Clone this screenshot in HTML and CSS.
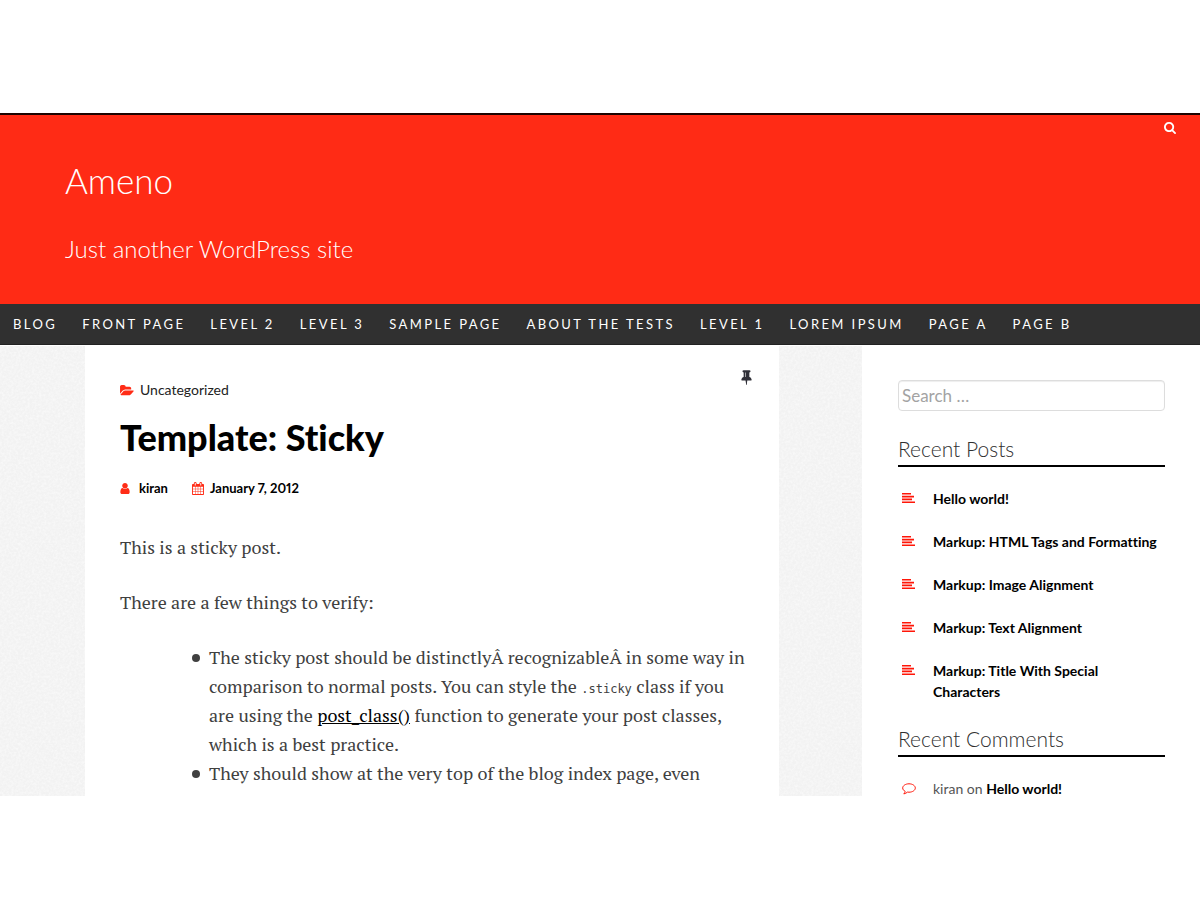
FILE: index.html
```html
<!DOCTYPE html>
<html lang="en">
<head>
<meta charset="utf-8">
<title>Ameno</title>
<link rel="stylesheet" href="styles.css">
</head>
<body>
<svg class="sprite" aria-hidden="true">
  <symbol id="lines" viewBox="0 0 13 10"><path d="M0 0h9v1.600H0zM0 2.800h12v1.600H0zM0 5.600h10v1.600H0zM0 8.400h13v1.600H0z"/></symbol>
  <symbol id="comment" viewBox="0 0 14 12"><path d="M7 .8C3.500.8.700 2.700.700 5c0 1.400 1 2.600 2.500 3.400-.2 1-.7 1.800-1.400 2.500 1.500-.2 2.700-.9 3.600-1.800.5.100 1 .1 1.600.1 3.500 0 6.300-1.900 6.300-4.200S10.500.8 7 .8z" fill="none" stroke="currentColor"/></symbol>
</svg>
<div class="site">
  <header class="masthead">
    <button class="search-toggle" type="button" aria-label="Search">
      <svg viewBox="0 0 1664 1792"><path d="M1152 832q0-185-131.500-316.500t-316.500-131.500-316.500 131.500-131.500 316.500 131.500 316.500 316.500 131.500 316.500-131.500 131.500-316.500zm512 832q0 52-38 90t-90 38q-54 0-90-38l-343-342q-179 124-399 124-143 0-273.500-55.500t-225-150-150-225-55.500-273.500 55.500-273.500 150-225 225-150 273.500-55.500 273.500 55.500 225 150 150 225 55.500 273.500q0 220-124 399l343 343q37 37 37 90z"/></svg>
    </button>
    <h1 class="site-title">Ameno</h1>
    <p class="tagline">Just another WordPress site</p>
  </header>
  <nav class="menu">
    <a href="#">Blog</a>
    <a href="#">Front Page</a>
    <a href="#">Level 2</a>
    <a href="#">Level 3</a>
    <a href="#">Sample Page</a>
    <a href="#">About The Tests</a>
    <a href="#">Level 1</a>
    <a href="#">Lorem Ipsum</a>
    <a href="#">Page A</a>
    <a href="#">Page B</a>
  </nav>
  <div class="columns">
    <main class="post">
      <div class="post-top">
        <a class="category" href="#">
          <svg class="folder" viewBox="0 0 1920 1792"><path d="M1879 952q0 31-31 66l-336 396q-43 51-120.500 86.500t-143.500 35.500h-1088q-34 0-60.500-13t-26.500-43q0-31 31-66l336-396q43-51 120.500-86.500t143.500-35.500h1088q34 0 60.500 13t26.500 43zm-343-344v160h-832q-94 0-197 47.500t-164 119.500l-337 396-5 6q0-4-.5-12.500t-.5-12.500v-960q0-92 66-158t158-66h320q92 0 158 66t66 158v32h544q92 0 158 66t66 158z"/></svg>
          Uncategorized</a>
        <svg class="pin" viewBox="0 0 1152 1792"><path d="M480 864v-448q0-14-9-23t-23-9-23 9-9 23v448q0 14 9 23t23 9 23-9 9-23zm672 352q0 26-19 45t-45 19h-429l-51 483q-2 12-10.500 20.500t-20.500 8.500h-1q-27 0-32-27l-76-485h-404q-26 0-45-19t-19-45q0-123 78.500-221.500t177.500-98.500v-512q-52 0-90-38t-38-90 38-90 90-38h640q52 0 90 38t38 90-38 90-90 38v512q99 0 177.500 98.500t78.500 221.500z"/></svg>
      </div>
      <h2 class="post-title">Template: Sticky</h2>
      <div class="meta">
        <a href="#"><svg class="user" viewBox="0 0 1280 1792"><path d="M1280 1399q0 109-62.500 187t-150.500 78h-854q-88 0-150.500-78t-62.500-187q0-85 8.500-160.500t31.500-152 58.500-131 94-89 134.500-34.500q131 128 313 128t313-128q76 0 134.500 34.500t94 89 58.500 131 31.500 152 8.500 160.500zm-256-887q0 159-112.500 271.500t-271.500 112.500-271.500-112.500-112.500-271.500 112.500-271.500 271.500-112.500 271.500 112.500 112.500 271.500z"/></svg>kiran</a>
        <a href="#"><svg class="calendar" viewBox="0 0 1664 1792"><path d="M128 1664h288v-288h-288v288zm352 0h320v-288h-320v288zm-352-352h288v-320h-288v320zm352 0h320v-320h-320v320zm-352-384h288v-288h-288v288zm736 736h320v-288h-320v288zm-384-736h320v-288h-320v288zm768 736h288v-288h-288v288zm-384-352h320v-320h-320v320zm-352-864v-288q0-13-9.500-22.500t-22.500-9.500h-64q-13 0-22.500 9.500t-9.500 22.500v288q0 13 9.500 22.500t22.500 9.500h64q13 0 22.500-9.500t9.500-22.500zm736 864h288v-320h-288v320zm-384-384h320v-288h-320v288zm384 0h288v-288h-288v288zm32-480v-288q0-13-9.500-22.500t-22.500-9.500h-64q-13 0-22.500 9.500t-9.500 22.500v288q0 13 9.500 22.500t22.500 9.500h64q13 0 22.500-9.500t9.500-22.500zm384-64v1280q0 52-38 90t-90 38h-1408q-52 0-90-38t-38-90v-1280q0-52 38-90t90-38h128v-96q0-66 47-113t113-47h64q66 0 113 47t47 113v96h384v-96q0-66 47-113t113-47h64q66 0 113 47t47 113v96h128q52 0 90 38t38 90z"/></svg>January 7, 2012</a>
      </div>
      <div class="entry">
        <p>This is a sticky post.</p>
        <p>There are a few things to verify:</p>
        <ul>
          <li>The sticky post should be distinctlyÂ recognizableÂ in some way in comparison to normal posts. You can style the <code>.sticky</code> class if you are using the <a href="#">post_class()</a> function to generate your post classes, which is a best practice.</li>
          <li>They should show at the very top of the blog index page, even though they could be several posts back chronologically.</li>
        </ul>
      </div>
    </main>
    <aside class="sidebar">
      <input class="search" type="search" placeholder="Search …" aria-label="Search">
      <h3>Recent Posts</h3>
      <ul class="links">
        <li><svg class="lines"><use href="#lines"/></svg><a href="#">Hello world!</a></li>
        <li><svg class="lines"><use href="#lines"/></svg><a href="#">Markup: HTML Tags and Formatting</a></li>
        <li><svg class="lines"><use href="#lines"/></svg><a href="#">Markup: Image Alignment</a></li>
        <li><svg class="lines"><use href="#lines"/></svg><a href="#">Markup: Text Alignment</a></li>
        <li><svg class="lines"><use href="#lines"/></svg><a href="#">Markup: Title With Special Characters</a></li>
      </ul>
      <h3>Recent Comments</h3>
      <ul class="links">
        <li><svg class="comment"><use href="#comment"/></svg><span>kiran on <a href="#">Hello world!</a></span></li>
      </ul>
    </aside>
  </div>
</div>
</body>
</html>
```
FILE: styles.css
```css
* { box-sizing: border-box; }
body {
  margin: 0;
  height: 100vh;
  padding: 113px 0 104px;
  display: flex;
  background: #fff;
  color: #404040;
  font-family: Lato, "Open Sans", sans-serif;
  font-variant-ligatures: none;
}
h1, h2, h3, p, ul { margin: 0; padding: 0; }
a { color: #000; text-decoration: none; }
svg { fill: currentColor; flex: none; }
.sprite { position: absolute; width: 0; height: 0; }
.site {
  flex: 1;
  min-width: 0;
  overflow: hidden;
  display: flex;
  flex-direction: column;
  background-color: #f2f2f2;
  background-image: url("data:image/svg+xml,%3Csvg xmlns='http://www.w3.org/2000/svg' width='200' height='200'%3E%3Cfilter id='n'%3E%3CfeTurbulence type='fractalNoise' baseFrequency='.43' numOctaves='3' stitchTiles='stitch'/%3E%3CfeColorMatrix values='0 0 0 0 1 0 0 0 0 1 0 0 0 0 1 2 0 0 0 -.7'/%3E%3C/filter%3E%3Crect width='200' height='200' filter='url(%23n)' opacity='.5'/%3E%3C/svg%3E");
}
.masthead {
  position: relative;
  flex: none;
  padding: 42px 65px 39px;
  background: #ff2b15;
  border-top: 2px solid #1c0300;
  color: #fff;
  font-weight: 300;
}
.site-title { font-size: 35px; line-height: 46px; font-weight: 300; }
.tagline { margin-top: 30px; font-size: 24px; line-height: 32px; }
.search-toggle {
  position: absolute;
  top: 6px;
  right: 24px;
  padding: 0;
  border: 0;
  background: none;
  color: #fff;
  line-height: 0;
}
.search-toggle svg { width: 12px; height: 13px; }
.menu {
  flex: none;
  display: flex;
  background: #303030;
  border-bottom: 1px solid #222;
}
.menu a {
  padding: 0 12px 0 13px;
  color: #fff;
  font-size: 13px;
  line-height: 40px;
  letter-spacing: .185em;
  text-transform: uppercase;
  white-space: nowrap;
}
.columns { flex: 1; min-height: 0; display: flex; gap: 83px; padding-left: 85px; border-top: 1px solid #fff; }
.post { flex: 1; min-width: 0; padding: 23px 27px 0 35px; background: #fff; }
.post-top { display: flex; justify-content: space-between; align-items: flex-start; }
.category {
  display: flex;
  align-items: center;
  gap: 6px;
  padding-top: 11px;
  color: #222;
  font-size: 14px;
  line-height: 20px;
}
.folder { width: 14px; height: 13px; color: #ff2c16; }
.pin { width: 11px; height: 16px; color: #303038; }
.post-title { margin-top: 13px; font-size: 36px; line-height: 48px; font-weight: 900; color: #000; }
.meta { display: flex; gap: 24px; margin-top: 17px; font-size: 13px; line-height: 20px; font-weight: 700; font-variant-numeric: proportional-nums; }
.meta a { display: flex; align-items: center; }
.meta svg { color: #ff2c16; }
.user { width: 10px; height: 13px; margin-right: 9px; }
.calendar { width: 12px; height: 13px; margin-right: 6px; }
.entry { margin-top: 35px; font-family: "PT Serif", "Liberation Serif", serif; font-size: 18px; line-height: 29px; }
.entry p { margin-bottom: 26px; }
.entry ul { padding-left: 89px; list-style: none; }
.entry li { position: relative; }
.entry li::before {
  content: "";
  position: absolute;
  left: -17px;
  top: 11px;
  width: 8px;
  height: 8px;
  border-radius: 50%;
  background: #404040;
}
.entry a { color: #000; text-decoration: underline; }
.entry code { font-family: "DejaVu Sans Mono", monospace; font-size: 12px; line-height: 1; }
.sidebar { width: 338px; flex: none; padding: 34px 35px 0 36px; background: #fff; }
.search {
  display: block;
  width: 100%;
  height: 31px;
  margin-bottom: 22px;
  padding: 0 3px;
  border: 1px solid #ddd;
  border-radius: 4px;
  background: #fff;
  font: 400 17px Lato, sans-serif;
  box-shadow: inset 0 1px 1px #eee;
}
.search::placeholder { color: #a3a3a3; opacity: 1; }
.sidebar h3 {
  padding-bottom: 1px;
  border-bottom: 2px solid #000;
  color: #303030;
  font-size: 21px;
  line-height: 31px;
  font-weight: 300;
}
.links { list-style: none; padding: 21px 0 0 4px; font-size: 14px; line-height: 21px; color: #555; }
.links li { display: flex; margin-bottom: 21px; }
.links li + li { margin-top: 22px; }
.links { display: flow-root; }
.links svg { color: #ff1608; }
.links a { font-weight: 700; }
.links li:not(:last-child) { margin-bottom: 0; }
.lines { width: 13px; height: 10px; margin: 5px 18px 0 0; }
.comment { width: 14px; height: 12px; margin: 5px 17px 0 0; }
```
